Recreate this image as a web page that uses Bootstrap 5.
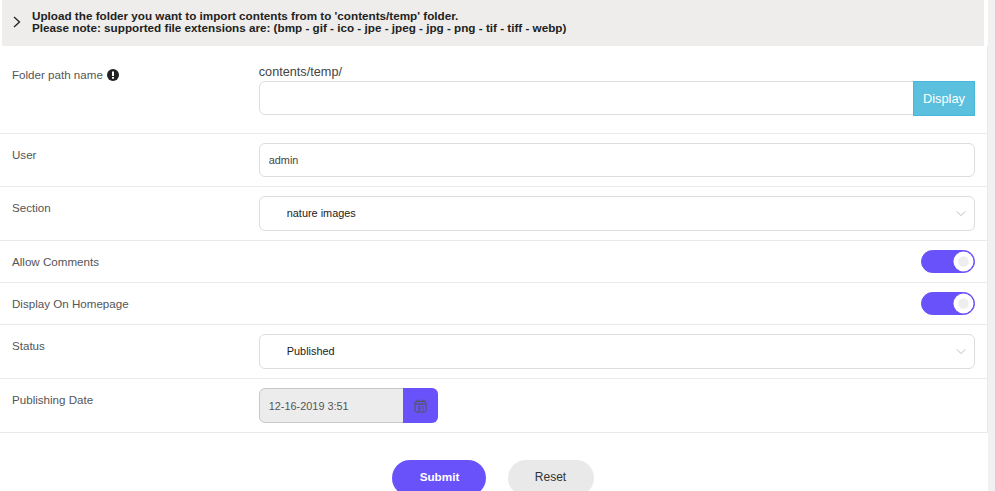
<!DOCTYPE html>
<html lang="en">
<head>
<meta charset="utf-8">
<title>Import contents</title>
<link href="https://cdn.jsdelivr.net/npm/bootstrap@5.3.0/dist/css/bootstrap.min.css" rel="stylesheet">
<style>
html,body{height:491px;overflow:hidden;background:#fff}
body{font-family:"Liberation Sans",Arial,sans-serif;font-size:11.6px;color:#555}
.shell{height:491px}
.pagecol{width:988px;flex:none}
.trackbar{flex:1;background:#f1f1f1}
.noticebar{margin:0 4px 0 2px;height:46px;background:#eeedeb;color:#222;font-weight:700;font-size:11.7px;line-height:12px;padding-left:11px;padding-bottom:3px;gap:11px}
.formline{border-bottom:1px solid #eaeaea;margin:0;padding:9px 0;--bs-gutter-x:24px;width:987px;box-shadow:1px 0 0 #eaeaea}
.formline .col-3,.formline .col-9{padding-left:12px;padding-right:12px}
.firstline{padding-top:17px;padding-bottom:17px}
.fieldlabel{padding-top:3px;line-height:18px;color:#555}
.firstline .fieldlabel{padding-top:3px}
.infoicon{margin-top:3px}
.pathhint{font-size:12.7px;line-height:18px;color:#444;margin-bottom:0}
.form-control.fieldbox,.form-select.fieldbox{height:34px;font-size:10.9px;color:#444;border:1px solid #ddd;border-radius:6px;padding:0 9px;box-shadow:none}
.form-select.fieldbox{height:35px;padding-left:27px;color:#222;--bs-form-select-bg-img:none;background-image:url("data:image/svg+xml,%3Csvg xmlns='http://www.w3.org/2000/svg' viewBox='0 0 12 8'%3E%3Cpath d='M1 1.5l5 5 5-5' fill='none' stroke='%23bbb' stroke-width='1.2'/%3E%3C/svg%3E");background-size:10px 7px;background-position:right 8px center}
.displaybtn{width:62px;height:35px;background:#5bc0de;border:1px solid #46b8da;color:#fff;font-size:12.8px;border-radius:0;padding:0}
.displaybtn:hover{background:#5bc0de;color:#fff}
.form-switch .form-check-input.knob{width:54px;height:23px;margin:0;float:none;border:1px solid #6a52fb;background-color:#6a52fb;background-position:right center;background-size:auto 100%;--bs-form-check-bg-image:none;background-image:url("data:image/svg+xml,%3Csvg xmlns='http://www.w3.org/2000/svg' viewBox='-11 -11 22 22'%3E%3Ccircle r='10.5' fill='%23fff'/%3E%3Ccircle r='5.5' fill='%23eee'/%3E%3C/svg%3E");box-shadow:none}
.form-switch.switchwrap{padding:0;min-height:0;margin:0;line-height:0}
.switchline{padding:9px 0 9px}
.dategroup{width:179px;height:35px}
.dategroup .form-control{height:35px;background:#ececec;border:1px solid #c8c8c8;font-size:10.9px;color:#555;border-radius:6px 0 0 6px;padding:0 9px;box-shadow:none}
.calbtn{width:35px;background:#6a52fb;border:0;border-radius:0 6px 6px 0;padding:0;flex:none}
.actionrow{padding-top:27px;gap:22px;margin-right:3px}
.pillbtn{height:36px;border-radius:18px;font-size:12px;border:0;padding:0 0 3px}
.submitpill{width:94px;background:#6a52fb;color:#fff;font-weight:700;font-size:11.7px;padding-left:2px}
.submitpill:hover{background:#6a52fb;color:#fff}
.resetpill{width:86px;background:#e9e9e9;color:#333}
.resetpill:hover{background:#e9e9e9;color:#333}
</style>
</head>
<body>
<div class="shell d-flex">
<main class="pagecol">
  <div class="noticebar d-flex align-items-center">
    <svg width="8" height="12" viewBox="0 0 8 12" aria-hidden="true"><path d="M1 1l5.5 5-5.5 5" fill="none" stroke="#222" stroke-width="1.3"/></svg>
    <div>Upload the folder you want to import contents from to 'contents/temp' folder.<br>Please note: supported file extensions are: (bmp - gif - ico - jpe - jpeg - jpg - png - tif - tiff - webp)</div>
  </div>
  <form>
    <div class="row formline firstline">
      <div class="col-3 fieldlabel d-flex align-items-start gap-1">
        <span>Folder path name</span>
        <svg class="infoicon" width="12" height="12" viewBox="0 0 12 12" aria-hidden="true"><circle cx="6" cy="6" r="6" fill="#222"/><rect x="5" y="2.5" width="2" height="4.5" fill="#fff"/><rect x="5" y="8" width="2" height="1.7" fill="#fff"/></svg>
      </div>
      <div class="col-9">
        <p class="pathhint">contents/temp/</p>
        <div class="input-group">
          <input type="text" class="form-control fieldbox" aria-label="Folder path name">
          <button type="button" class="btn displaybtn">Display</button>
        </div>
      </div>
    </div>
    <div class="row formline">
      <div class="col-3 fieldlabel">User</div>
      <div class="col-9"><input type="text" class="form-control fieldbox" value="admin" aria-label="User"></div>
    </div>
    <div class="row formline">
      <div class="col-3 fieldlabel">Section</div>
      <div class="col-9"><select class="form-select fieldbox" aria-label="Section"><option>nature images</option></select></div>
    </div>
    <div class="row formline switchline">
      <div class="col-3 fieldlabel">Allow Comments</div>
      <div class="col-9 d-flex justify-content-end"><div class="form-check form-switch switchwrap"><input class="form-check-input knob" type="checkbox" checked aria-label="Allow Comments"></div></div>
    </div>
    <div class="row formline switchline">
      <div class="col-3 fieldlabel">Display On Homepage</div>
      <div class="col-9 d-flex justify-content-end"><div class="form-check form-switch switchwrap"><input class="form-check-input knob" type="checkbox" checked aria-label="Display On Homepage"></div></div>
    </div>
    <div class="row formline">
      <div class="col-3 fieldlabel">Status</div>
      <div class="col-9"><select class="form-select fieldbox" aria-label="Status"><option>Published</option></select></div>
    </div>
    <div class="row formline">
      <div class="col-3 fieldlabel">Publishing Date</div>
      <div class="col-9">
        <div class="input-group dategroup">
          <input type="text" class="form-control" value="12-16-2019 3:51" readonly aria-label="Publishing Date">
          <button type="button" class="btn calbtn d-flex align-items-center justify-content-center" aria-label="Calendar">
            <svg width="13" height="14" viewBox="0 0 13 14" aria-hidden="true"><rect x="1" y="2.5" width="11" height="10.5" rx="1" fill="none" stroke="#555" stroke-width="1"/><path d="M1 5h11" stroke="#555" stroke-width="1.2"/><path d="M3 .8v2M5 .8v2M8 .8v2M10 .8v2" stroke="#555"/><path d="M4 7.5h2v1.8h-1.5h1.5v2h-2M8 7.5h1v4" fill="none" stroke="#555" stroke-width=".8"/></svg>
          </button>
        </div>
      </div>
    </div>
    <div class="actionrow d-flex justify-content-center">
      <button type="button" class="btn pillbtn submitpill">Submit</button>
      <button type="reset" class="btn pillbtn resetpill">Reset</button>
    </div>
  </form>
</main>
<div class="trackbar"></div>
</div>
<script src="https://cdn.jsdelivr.net/npm/bootstrap@5.3.0/dist/js/bootstrap.bundle.min.js"></script>
</body>
</html>
